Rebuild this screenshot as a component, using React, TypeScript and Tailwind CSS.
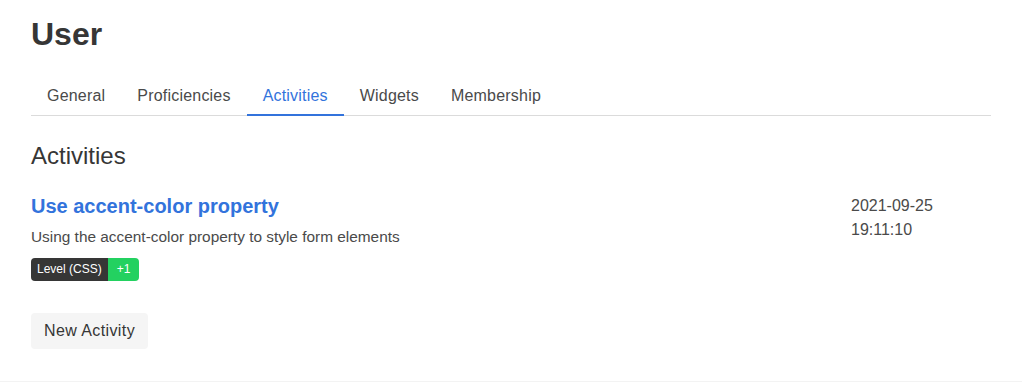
export default function App() {
  const tabs = ['General', 'Proficiencies', 'Activities', 'Widgets', 'Membership'];
  const active = 'Activities';

  return (
    <div className="min-h-[382px] bg-white text-[#363636] font-['Liberation_Sans',_sans-serif] border-b border-[#f3f3f3]">
      <div className="w-[960px] ml-[31px] pt-[16px]">
        {/* Header */}
        <h1 className="text-[32px] font-bold leading-[36px] text-[#363636]">User</h1>

        {/* Tabs */}
        <div className="mt-[23px] flex border-b border-[#dbdbdb]">
          {tabs.map((tab) => {
            const isActive = tab === active;
            return (
              <a
                key={tab}
                className={`px-4 pt-[9px] pb-[6px] text-base leading-6 tracking-[0.2px] -mb-px border-b-2 ${
                  isActive ? 'text-[#3273dc] border-[#3273dc]' : 'text-[#4a4a4a] border-transparent'
                }`}
              >
                {tab}
              </a>
            );
          })}
        </div>

        {/* Activities */}
        <h2 className="mt-[25px] text-2xl leading-[30px] text-[#363636]">Activities</h2>

        <div className="mt-[23px] flex">
          <div className="flex-1">
            <a className="block text-xl font-bold leading-[24px] text-[#3273dc]">Use accent-color property</a>
            <p className="mt-[8px] text-[15.4px] leading-[22px] text-[#4a4a4a]">
              Using the accent-color property to style form elements
            </p>
            <div className="mt-[10px] flex text-xs leading-[23px] text-white">
              <span className="bg-[#363636] px-[6px] rounded-l-[4px]">Level (CSS)</span>
              <span className="bg-[#23d160] px-[9px] rounded-r-[4px]">+1</span>
            </div>
          </div>
          <div className="w-[140px] text-base leading-6 text-[#4a4a4a]">
            <div>2021-09-25</div>
            <div>19:11:10</div>
          </div>
        </div>

        <button className="mt-[32px] h-9 px-[13px] rounded bg-[#f5f5f5] text-base tracking-[0.4px] text-[#363636]">
          New Activity
        </button>
      </div>
    </div>
  );
}
